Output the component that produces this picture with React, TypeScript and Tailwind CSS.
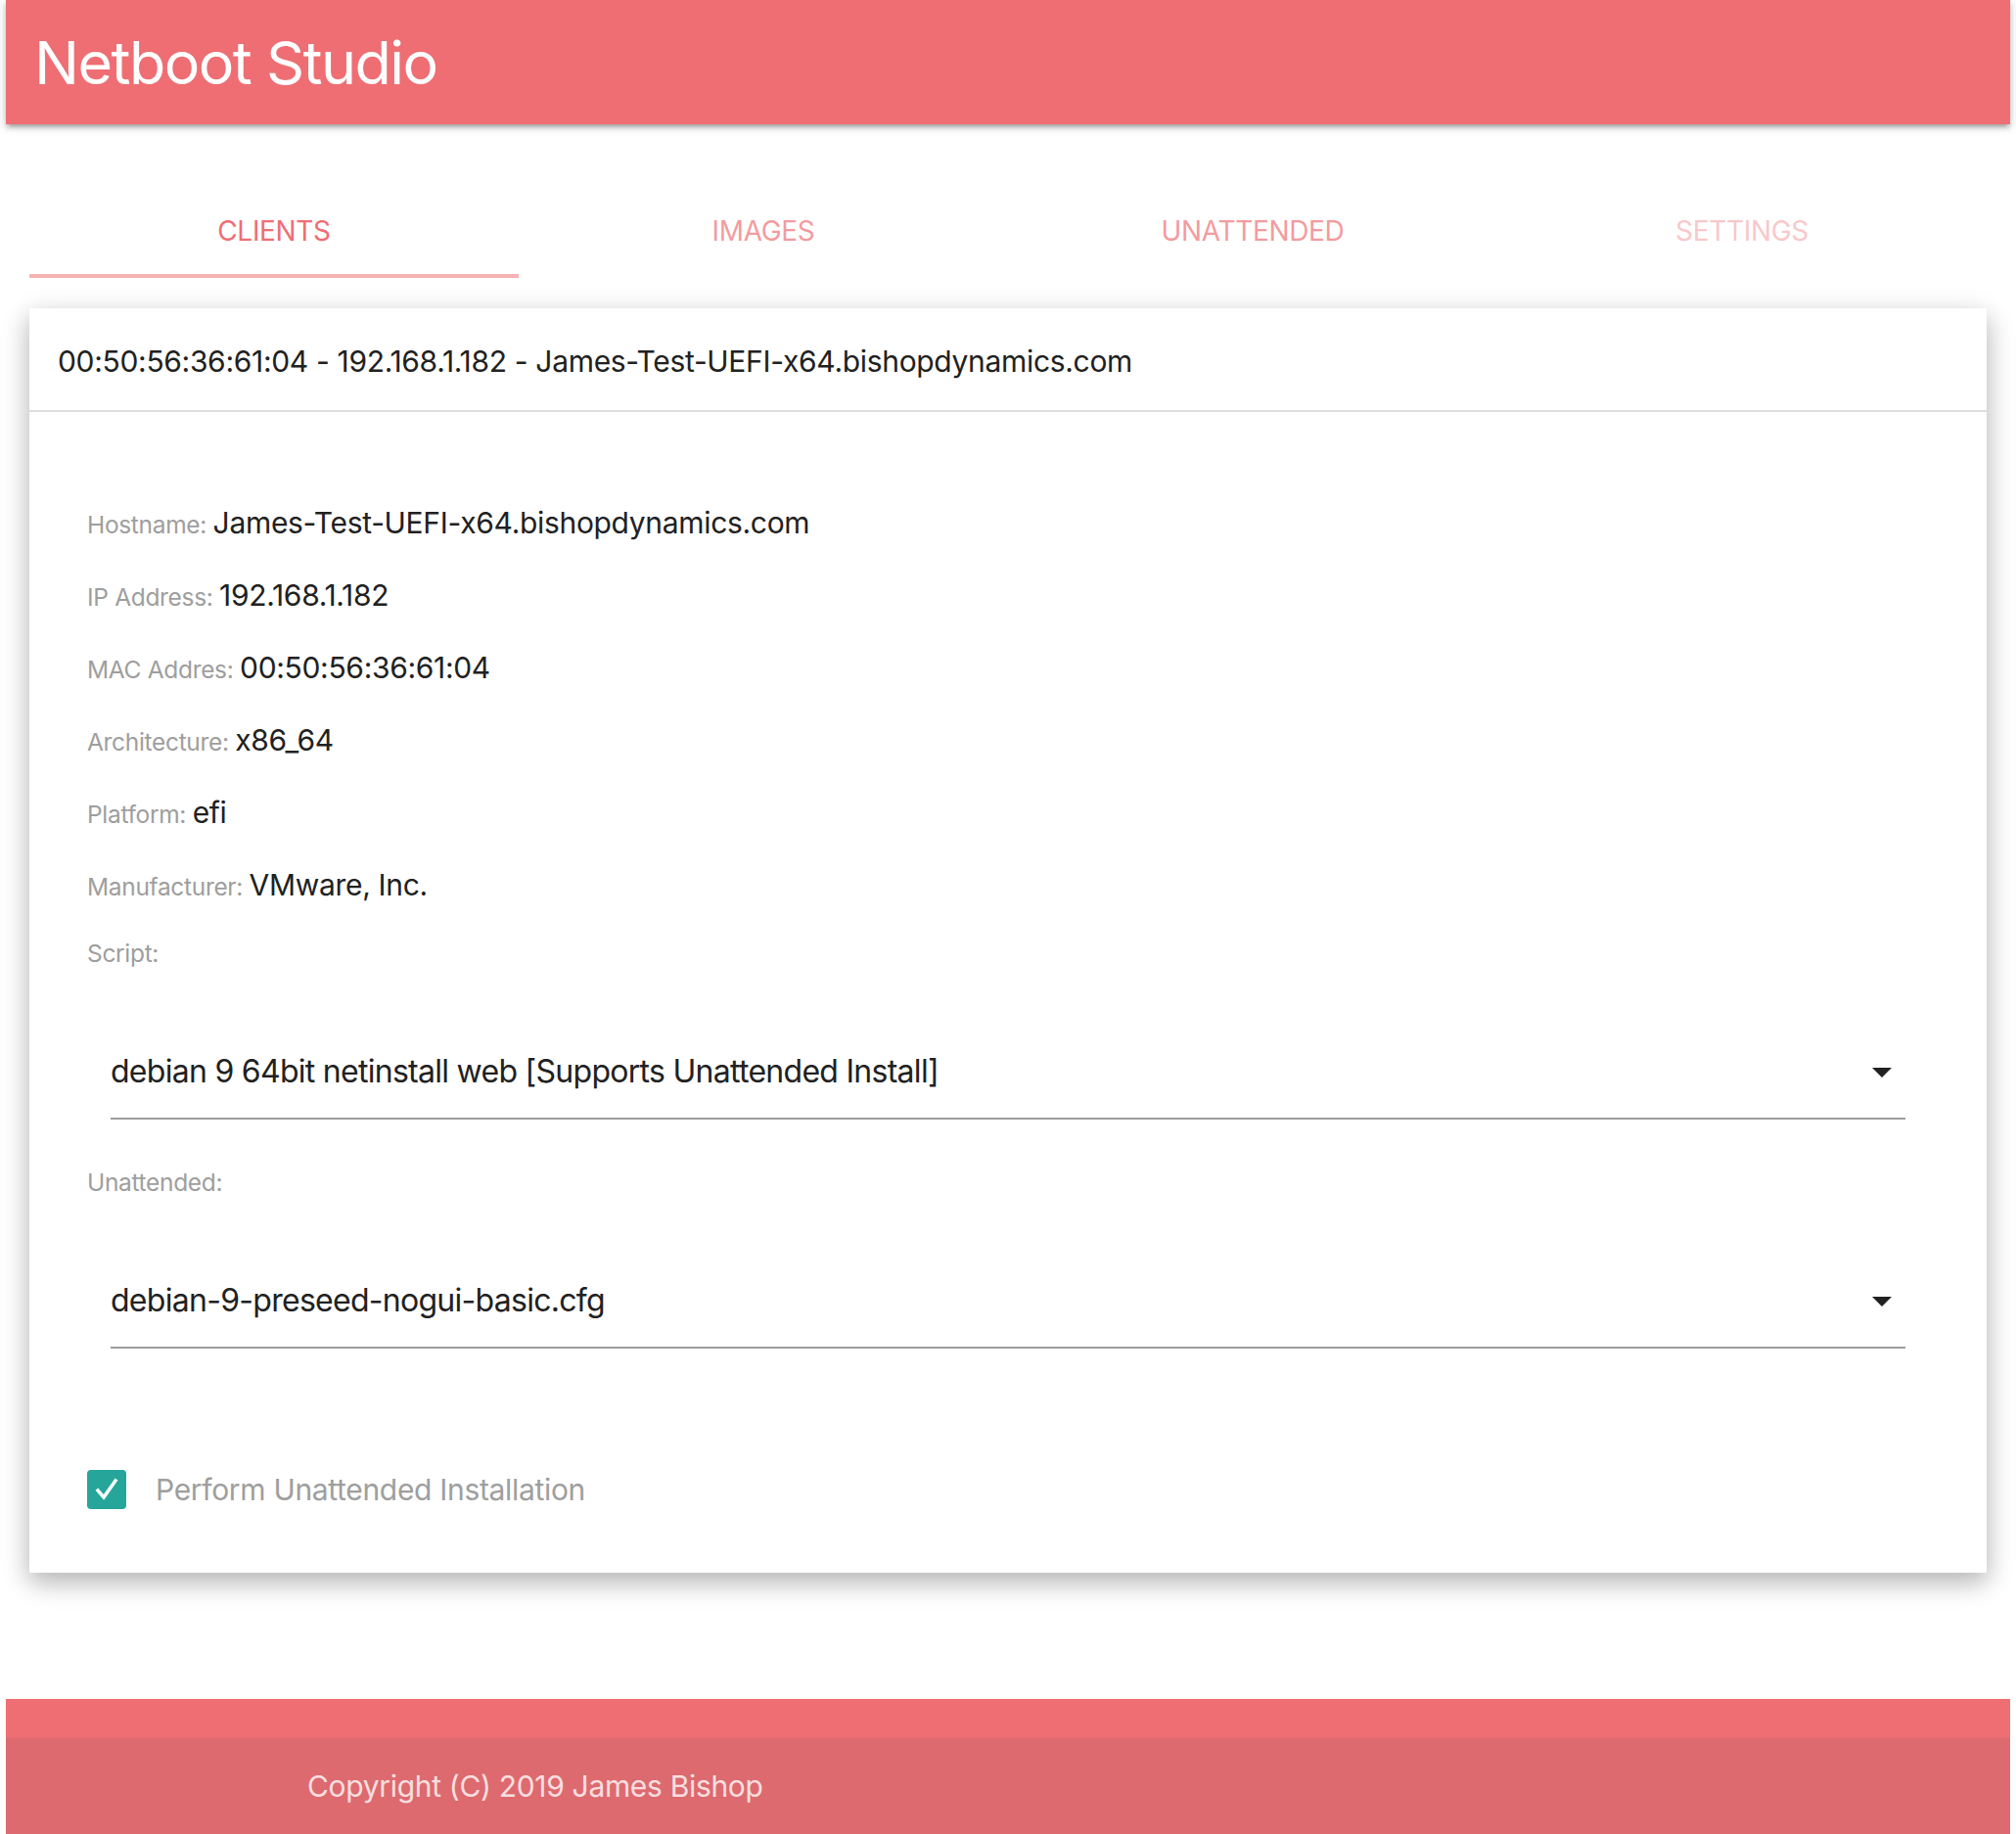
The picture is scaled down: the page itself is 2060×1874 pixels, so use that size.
import React from "react";

function Caret() {
  return (
    <svg width="48" height="48" viewBox="0 0 24 24" className="shrink-0">
      <path d="M7 10l5 5 5-5z" fill="#212121" />
    </svg>
  );
}

function InfoRow({ label, value }: { label: string; value: string }) {
  return (
    <div className="h-[74px] flex items-center">
      <div className="flex items-baseline">
        <span className="text-[24.5px] text-[#9e9e9e]">{label}&nbsp;</span>
        <span className="text-[30px] text-[#212121]">{value}</span>
      </div>
    </div>
  );
}

function Select({ value }: { value: string }) {
  return (
    <div className="mx-[24px] h-[96px] border-b-2 border-[#9e9e9e] flex items-center justify-between">
      <span className="text-[32px] text-[#212121] tracking-[-0.0225em]">{value}</span>
      <Caret />
    </div>
  );
}

export default function App() {
  const tabs = [
    { name: "CLIENTS", cls: "text-[#ee6e73]" },
    { name: "IMAGES", cls: "text-[rgba(238,110,115,0.7)]" },
    { name: "UNATTENDED", cls: "text-[rgba(238,110,115,0.7)]" },
    { name: "SETTINGS", cls: "text-[rgba(238,110,115,0.4)]" },
  ];
  return (
    <div className="min-h-[1874px] bg-white flex flex-col font-['Inter','Noto_Sans',sans-serif] tracking-[-0.02em]">
      <header className="mx-[6px] h-[127px] bg-[#ee6e73] flex items-center pl-[29px] pt-[2px] shadow-[0_4px_4px_0_rgba(0,0,0,0.14),0_6px_2px_-4px_rgba(0,0,0,0.12),0_2px_10px_0_rgba(0,0,0,0.2)] relative z-10">
        <span className="text-white text-[61px] leading-none tracking-[-0.025em]">Netboot Studio</span>
      </header>

      <main className="px-[30px]">
        <div className="mt-[61px] h-[96px] grid grid-cols-4 relative">
          {tabs.map((t) => (
            <div key={t.name} className={`flex items-center justify-center text-[28px] ${t.cls}`}>
              {t.name}
            </div>
          ))}
          <div className="absolute bottom-0 left-0 w-1/4 h-[4px] bg-[#f6b2b5]" />
        </div>

        <div className="mt-[31px] bg-white shadow-[0_10px_22px_0_rgba(0,0,0,0.18),0_8px_30px_0_rgba(0,0,0,0.15)]">
          <div className="h-[106px] border-b-2 border-[#dddddd] pl-[29px] pt-[4px] flex items-center text-[30px] text-[#212121]">
            00:50:56:36:61:04 - 192.168.1.182 - James-Test-UEFI-x64.bishopdynamics.com
          </div>
          <div className="px-[59px] pt-[76px] pb-[55px]">
            <InfoRow label="Hostname:" value="James-Test-UEFI-x64.bishopdynamics.com" />
            <InfoRow label="IP Address:" value="192.168.1.182" />
            <InfoRow label="MAC Addres:" value="00:50:56:36:61:04" />
            <InfoRow label="Architecture:" value="x86_64" />
            <InfoRow label="Platform:" value="efi" />
            <InfoRow label="Manufacturer:" value="VMware, Inc." />
            <div className="mt-[3px] h-[60px] flex items-center text-[24.5px] text-[#9e9e9e]">Script:</div>
            <div className="mt-[44px]">
              <Select value="debian 9 64bit netinstall web [Supports Unattended Install]" />
            </div>
            <div className="mt-[34px] h-[60px] flex items-center text-[24.5px] text-[#9e9e9e]">Unattended:</div>
            <div className="mt-[44px]">
              <Select value="debian-9-preseed-nogui-basic.cfg" />
            </div>
            <div className="mt-[114px] h-[60px] flex items-center">
              <div className="w-[40px] h-[40px] rounded-[4px] bg-[#26a69a] flex items-center justify-center shrink-0">
                <svg width="40" height="40" viewBox="0 0 40 40">
                  <polyline points="11,21 17,28 29,11" fill="none" stroke="white" strokeWidth="3.5" strokeLinecap="square" />
                </svg>
              </div>
              <span className="ml-[30px] text-[30px] text-[#9e9e9e]">Perform Unattended Installation</span>
            </div>
          </div>
        </div>
      </main>

      <footer className="mt-auto mx-[6px] pt-[40px] bg-[#ee6e73]">
        <div className="h-[98px] bg-[#dd6a6f] flex items-center pl-[308px]">
          <span className="text-[30px] text-[rgba(255,255,255,0.8)]">Copyright (C) 2019 James Bishop</span>
        </div>
      </footer>
    </div>
  );
}
